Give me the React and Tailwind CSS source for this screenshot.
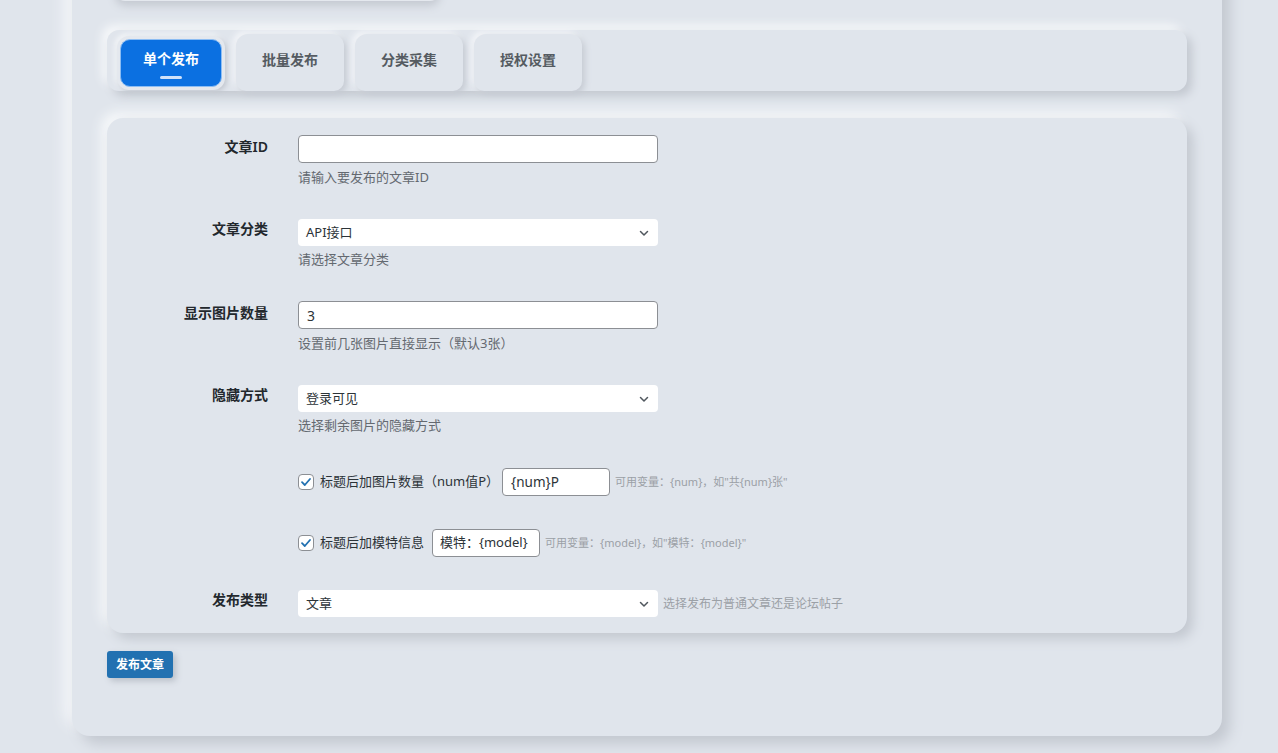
import { useState } from 'react';

const FONT = { fontFamily: '"Noto Sans", "Noto Sans CJK SC", sans-serif' };

const tabs = ['单个发布', '批量发布', '分类采集', '授权设置'];

function Chevron() {
  return (
    <svg width="12" height="12" viewBox="0 0 12 12" className="shrink-0">
      <path d="M2.5 4.5 L6 8 L9.5 4.5" fill="none" stroke="#50575e" strokeWidth="1.5" strokeLinecap="round" strokeLinejoin="round" />
    </svg>
  );
}

function Select({ value }) {
  return (
    <div className="w-[360px] h-[27px] bg-white rounded-[4px] flex items-center justify-between pl-[8px] pr-[8px] text-[13px] text-[#2c3338]">
      <span>{value}</span>
      <Chevron />
    </div>
  );
}

function TextInput({ value, width = 'w-[360px]', pad = 'px-[8px]', size = 'text-[14px]' }) {
  return (
    <div className={`${width} ${pad} ${size} h-[28px] bg-white rounded-[4px] border border-[#8c8f94] flex items-center whitespace-nowrap overflow-hidden text-[#2c3338]`}>
      {value}
    </div>
  );
}

function Checkbox() {
  return (
    <span className="w-[16px] h-[16px] bg-white border border-[#8c8f94] rounded-[4px] flex items-center justify-center shrink-0">
      <svg width="12" height="12" viewBox="0 0 12 12">
        <path d="M2 6.2 L4.8 9 L10 3" fill="none" stroke="#2271b1" strokeWidth="1.8" strokeLinecap="round" strokeLinejoin="round" />
      </svg>
    </span>
  );
}

function Row({ label, children, labelPad = 'pt-[2px]' }) {
  return (
    <div className="flex">
      <div className={`w-[161px] shrink-0 text-right text-[14px] leading-[20px] font-semibold text-[#23282d] ${labelPad}`}>
        {label}
      </div>
      <div className="pl-[30px]">{children}</div>
    </div>
  );
}

export default function App() {
  const [active, setActive] = useState(0);

  return (
    <div style={FONT} className="min-h-[753px] bg-[#e0e5ec] overflow-hidden">
      <div className="ml-[72px] w-[1150px] -mt-[40px] px-[35px] pb-[58px] bg-[#e0e5ec] rounded-b-[18px] shadow-[8px_8px_14px_#c3c8d0,-8px_-8px_14px_#f4f6f9]">
        {/* bottom edge of the card above */}
        <div className="ml-[8px] w-[325px] h-[41px] rounded-b-[10px] bg-[#e4e8ee] shadow-[0px_5px_8px_#c5cad2]" />

        {/* tab bar */}
        <div className="mt-[29px] h-[61px] rounded-[12px] bg-[#e0e5ec] shadow-[5px_5px_10px_#c3c8d0,-5px_-5px_10px_#f6f8fa] flex items-end gap-[11px] pl-[10px]">
          {tabs.map((t, i) =>
            i === active ? (
              <button
                key={t}
                onClick={() => setActive(i)}
                className="w-[108px] h-[54px] mb-[1px] rounded-[12px] p-[3px] bg-[#e4e8ee] shadow-[2px_2px_5px_#c3c8d0,-2px_-2px_5px_#f6f8fa]"
              >
                <span className="w-full h-full rounded-[10px] bg-[#0b70e1] border border-[#8cbdf3] flex flex-col items-center justify-center text-white text-[14px] font-bold">
                  <span className="leading-[20px] mt-[2px]">{t}</span>
                  <span className="mt-[7px] w-[22px] h-[3px] rounded-full bg-[#cfe2fa]" />
                </span>
              </button>
            ) : (
              <button
                key={t}
                onClick={() => setActive(i)}
                className="w-[108px] h-[57px] rounded-t-[12px] rounded-b-[10px] bg-[#e0e5ec] shadow-[3px_3px_6px_#c6cbd3,-3px_-3px_6px_#f4f6f9] text-[14px] font-bold text-[#555b61] pb-[6px]"
              >
                {t}
              </button>
            )
          )}
        </div>

        {/* form card */}
        <div className="mt-[27px] rounded-[16px] bg-[#e0e5ec] shadow-[6px_6px_12px_#c3c8d0,-6px_-6px_12px_#f6f8fa] pt-[17px] pb-[16px] flex flex-col gap-[33px]">
          <Row label="文章ID">
            <TextInput value="" />
            <p className="mt-[5px] text-[13px] leading-[18px] text-[#646970]">请输入要发布的文章ID</p>
          </Row>
          <Row label="文章分类" labelPad="pt-[0px]">
            <Select value="API接口" />
            <p className="mt-[4px] text-[13px] leading-[18px] text-[#646970]">请选择文章分类</p>
          </Row>
          <Row label="显示图片数量">
            <TextInput value="3" />
            <p className="mt-[5px] text-[13px] leading-[18px] text-[#646970]">设置前几张图片直接显示（默认3张）</p>
          </Row>
          <Row label="隐藏方式" labelPad="pt-[0px]">
            <Select value="登录可见" />
            <p className="mt-[4px] text-[13px] leading-[18px] text-[#646970]">选择剩余图片的隐藏方式</p>
          </Row>
          <Row label="">
            <div className="flex items-center mt-[1px]">
              <Checkbox />
              <span className="ml-[6px] text-[13px] text-[#2c3338] whitespace-nowrap">标题后加图片数量（num值P）</span>
              <span className="ml-[3px]"><TextInput value="{num}P" width="w-[108px]" size="text-[13.5px]" /></span>
              <span className="ml-[5px] text-[11px] text-[#9ba0a6] whitespace-nowrap">可用变量：{'{num}'}，如"共{'{num}'}张"</span>
            </div>
          </Row>
          <Row label="">
            <div className="flex items-center">
              <Checkbox />
              <span className="ml-[6px] text-[13px] text-[#2c3338] whitespace-nowrap">标题后加模特信息</span>
              <span className="ml-[8px]"><TextInput value="模特：{model}" width="w-[108px]" pad="px-[7px]" size="text-[13px]" /></span>
              <span className="ml-[5px] text-[11px] text-[#9ba0a6] whitespace-nowrap">可用变量：{'{model}'}，如"模特：{'{model}'}"</span>
            </div>
          </Row>
          <Row label="发布类型" labelPad="pt-[0px]">
            <div className="flex items-center">
              <Select value="文章" />
              <span className="ml-[5px] text-[12px] text-[#9ba0a6] whitespace-nowrap">选择发布为普通文章还是论坛帖子</span>
            </div>
          </Row>
        </div>

        <button className="mt-[18px] w-[66px] h-[27px] rounded-[3px] bg-[#2271b1] text-white text-[12px] font-bold shadow-[3px_3px_6px_#b9bfc8]">
          发布文章
        </button>
      </div>
    </div>
  );
}
